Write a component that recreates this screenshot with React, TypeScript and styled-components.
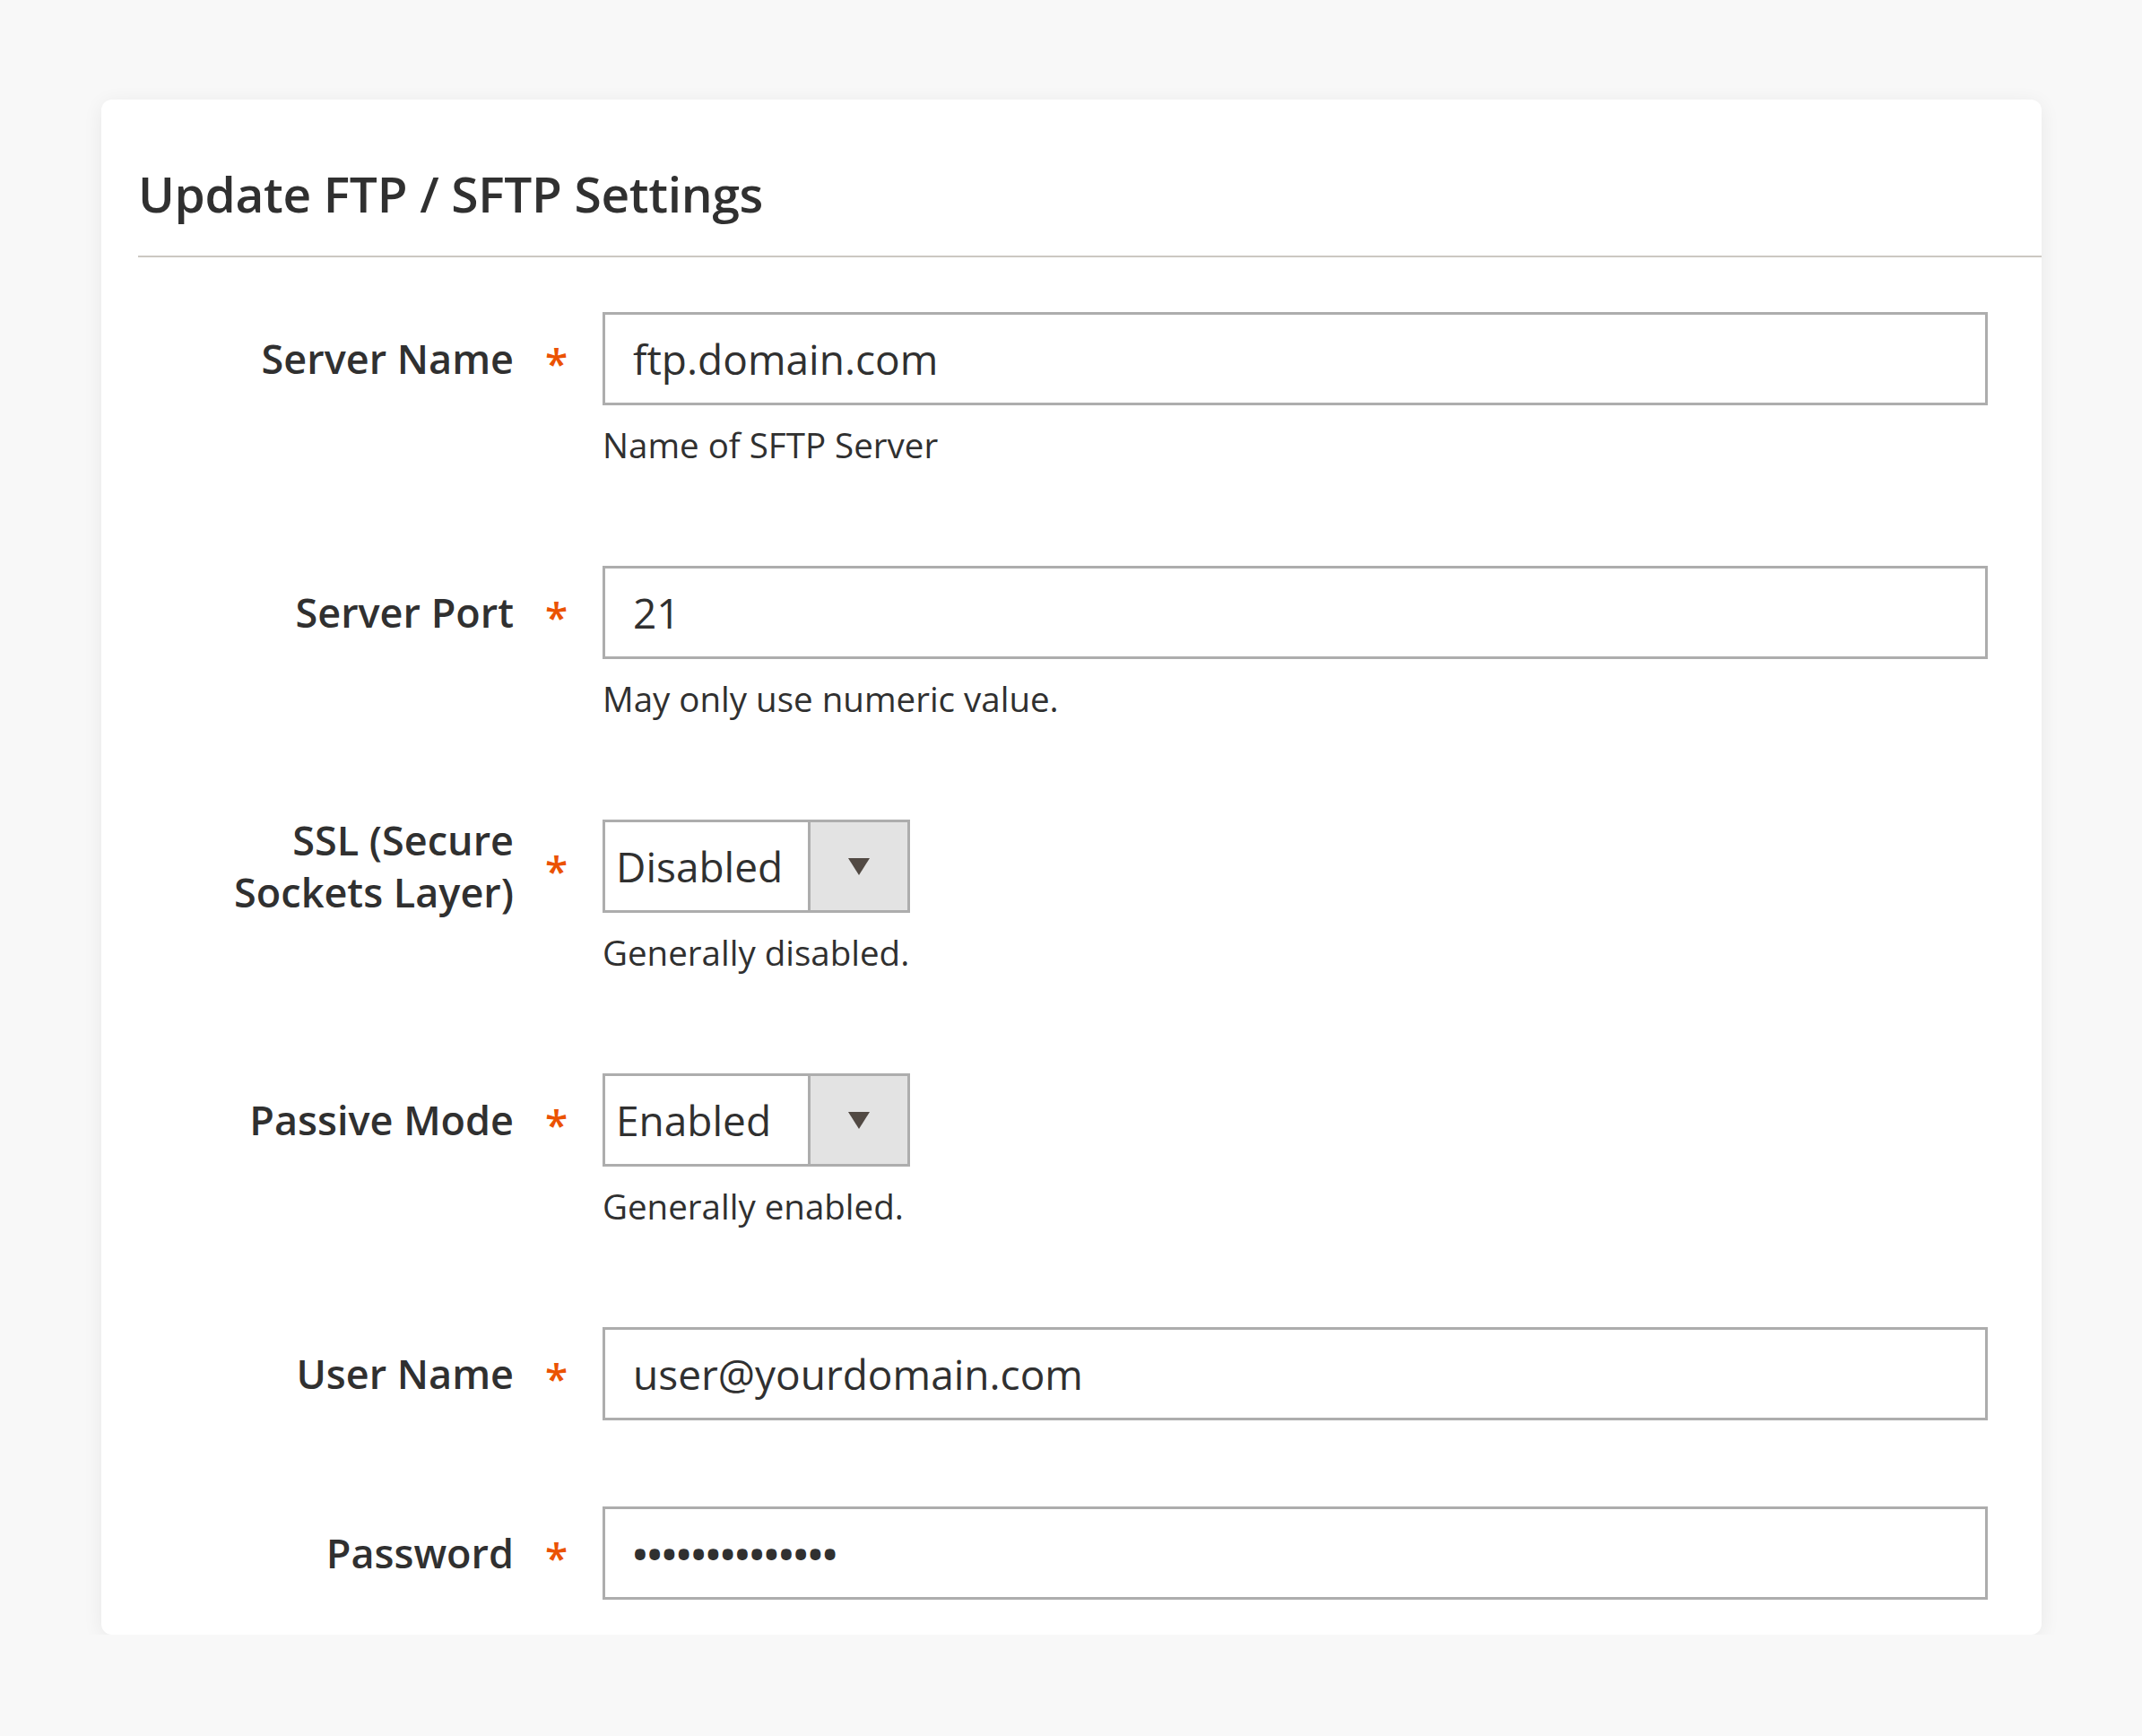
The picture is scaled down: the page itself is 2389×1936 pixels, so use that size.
import React from "react";
import styled, { createGlobalStyle } from "styled-components";

const Global = createGlobalStyle`
  html, body { margin: 0; padding: 0; background: #f8f8f8; }
  body { font-family: "Open Sans", "Noto Sans", sans-serif; color: #303030; }
`;

const Page = styled.div`
  padding: 111px 0 0 113px;
  width: 2164px;
`;

const Card = styled.section`
  background: #fff;
  border-radius: 12px;
  box-shadow: 0 4px 22px rgba(0, 0, 0, 0.07);
  padding-left: 41px;
  overflow: hidden;
`;

const Header = styled.div`
  padding-top: 70px;
  padding-bottom: 34px;
  border-bottom: 2px solid #ccc8c2;
`;

const Title = styled.h1`
  margin: 0;
  font-size: 55px;
  font-weight: 600;
  line-height: 70px;
  letter-spacing: -0.3px;
  color: #303030;
`;

const Form = styled.div`
  padding: 61px 60px 39px 0;
`;

const Row = styled.div<{ $last?: boolean }>`
  display: grid;
  grid-template-columns: 419px 99px 1fr;
  margin-bottom: ${(p) => (p.$last ? 0 : 96)}px;
`;

const LabelCell = styled.div`
  height: 104px;
  display: flex;
  align-items: center;
  justify-content: flex-end;
  text-align: right;
  font-size: 45px;
  font-weight: 600;
  line-height: 58px;
  color: #303030;
`;

const Star = styled.div`
  height: 104px;
  display: flex;
  align-items: center;
  justify-content: center;
  padding: 8px 4px 0 0;
  box-sizing: border-box;
  color: #eb5202;
  font-size: 46px;
  font-weight: 600;
`;

const Control = styled.div``;

const TextBox = styled.div`
  height: 104px;
  box-sizing: border-box;
  border: 3px solid #adadad;
  display: flex;
  align-items: center;
  padding-left: 31px;
  font-size: 46px;
  color: #303030;
`;

const Dots = styled.span`
  font-size: 42px;
  letter-spacing: 0.5px;
  font-weight: 700;
`;

const Select = styled.div`
  width: 343px;
  height: 104px;
  box-sizing: border-box;
  border: 3px solid #adadad;
  display: flex;
`;

const SelectValue = styled.div`
  flex: 1;
  display: flex;
  align-items: center;
  padding-left: 12px;
  font-size: 46px;
  color: #303030;
`;

const SelectArrow = styled.div`
  width: 108px;
  background: #e3e3e3;
  border-left: 3px solid #adadad;
  display: flex;
  align-items: center;
  justify-content: center;
`;

const Note = styled.div`
  margin-top: 18px;
  margin-bottom: 13px;
  font-size: 38.5px;
  line-height: 52px;
  color: #303030;
`;

const Arrow = () => (
  <svg width="24" height="19" viewBox="0 0 24 19">
    <polygon points="0,0 24,0 12,19" fill="#514943" />
  </svg>
);

type F = { label: React.ReactNode; kind: "text" | "select" | "password"; value: string; note?: string };

const fields: F[] = [
  { label: "Server Name", kind: "text", value: "ftp.domain.com", note: "Name of SFTP Server" },
  { label: "Server Port", kind: "text", value: "21", note: "May only use numeric value." },
  {
    label: (
      <>
        SSL (Secure
        <br />
        Sockets Layer)
      </>
    ),
    kind: "select",
    value: "Disabled",
    note: "Generally disabled.",
  },
  { label: "Passive Mode", kind: "select", value: "Enabled", note: "Generally enabled." },
  { label: "User Name", kind: "text", value: "user@yourdomain.com" },
  { label: "Password", kind: "password", value: "••••••••••••••" },
];

export default function App() {
  return (
    <>
      <Global />
      <Page>
        <Card>
          <Header>
            <Title>Update FTP / SFTP Settings</Title>
          </Header>
          <Form>
            {fields.map((f, i) => (
              <Row key={i} $last={i === fields.length - 1}>
                <LabelCell>{f.label}</LabelCell>
                <Star>*</Star>
                <Control>
                  {f.kind === "select" ? (
                    <Select>
                      <SelectValue>{f.value}</SelectValue>
                      <SelectArrow>
                        <Arrow />
                      </SelectArrow>
                    </Select>
                  ) : (
                    <TextBox>{f.kind === "password" ? <Dots>{f.value}</Dots> : f.value}</TextBox>
                  )}
                  {f.note && <Note>{f.note}</Note>}
                </Control>
              </Row>
            ))}
          </Form>
        </Card>
      </Page>
    </>
  );
}
